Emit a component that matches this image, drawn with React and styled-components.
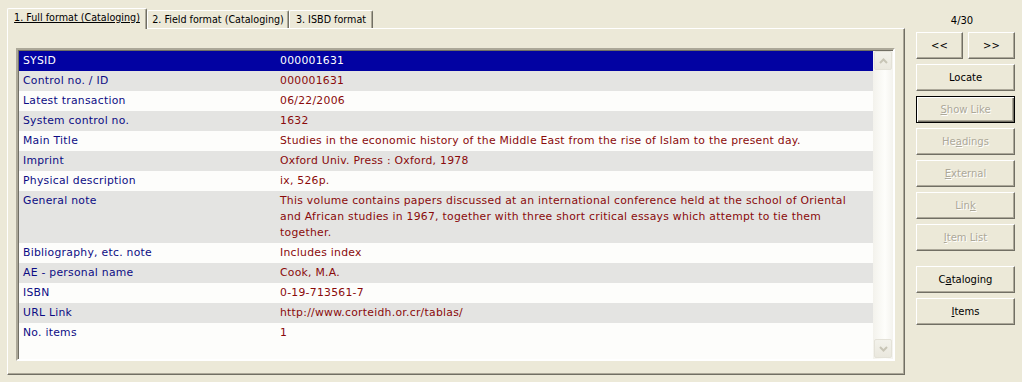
import React from "react";
import styled, { createGlobalStyle, css } from "styled-components";

const GlobalStyle = createGlobalStyle`
  html, body { margin: 0; padding: 0; }
  body {
    background: #ECE9D8;
    font-family: "DejaVu Sans", "Liberation Sans", sans-serif;
    overflow: hidden;
  }
`;

const Page = styled.div`
  display: flex;
  width: 1022px;
  height: 382px;
  box-sizing: border-box;
  padding: 0 7px 0 7px;
`;

const TabArea = styled.div`
  display: flex;
  flex-direction: column;
  width: 898px;
  padding-top: 8px;
`;

const TabStrip = styled.div`
  display: flex;
  align-items: flex-end;
  height: 20px;
  position: relative;
  z-index: 1;
`;

const Tab = styled.div`
  box-sizing: border-box;
  width: ${(p) => p.$w}px;
  height: ${(p) => (p.$active ? 21 : 18)}px;
  margin-bottom: ${(p) => (p.$active ? -1 : 0)}px;
  display: flex;
  align-items: center;
  justify-content: center;
  padding-bottom: ${(p) => (p.$active ? 3 : 0)}px;
  font-size: 9.6px;
  color: #000;
  background: #ECE9D8;
  border-top: 1px solid #fff;
  border-left: 1px solid #fff;
  border-right: 1px solid #716F64;
  box-shadow: inset -1px 0 #ACA899;
  border-radius: 2px 2px 0 0;
  white-space: nowrap;
  ${(p) =>
    p.$active &&
    css`
      text-decoration: underline;
    `}
`;

const TabPanel = styled.div`
  box-sizing: border-box;
  height: 347px;
  border: 1px solid;
  border-color: #fff #716F64 #716F64 #fff;
  box-shadow: inset -1px -1px #ACA899;
  padding: 19px 0 0 8px;
`;

const ListBox = styled.div`
  box-sizing: border-box;
  width: 879px;
  height: 313px;
  border: 2px solid;
  border-color: #ACA899 #fff #fff #ACA899;
  box-shadow: inset 1px 1px #716F64, inset -1px -1px #F1EFE2;
  display: flex;
  padding: 1px 0 0 1px;
  background: #fff;
`;

const Rows = styled.div`
  flex: 1;
  background: #FDFDFB;
  overflow: hidden;
`;

const Row = styled.div`
  display: grid;
  grid-template-columns: 261px 1fr;
  box-sizing: border-box;
  padding: 2px 0;
  min-height: 20px;
  line-height: 16px;
  font-size: 10.8px;
  letter-spacing: 0.27px;
  background: ${(p) => (p.$selected ? "#0202A2" : p.$shade ? "#E4E4E2" : "#FDFDFB")};
  border-bottom: 1px dotted
    ${(p) => (p.$selected ? "#0202A2" : p.$last ? "transparent" : "#DADAD6")};
  margin-bottom: -1px;
`;

const Label = styled.div`
  padding-left: 4px;
  color: ${(p) => (p.$selected ? "#fff" : "#0C0C84")};
  white-space: nowrap;
`;

const Value = styled.div`
  color: ${(p) => (p.$selected ? "#fff" : "#8A0A0A")};
  padding-right: 16px;
`;

const Line = styled.div`
  white-space: nowrap;
`;

const Scroll = styled.div`
  width: 20px;
  display: flex;
  flex-direction: column;
  justify-content: space-between;
  align-items: center;
  padding: 0 1px 1px 1px;
  box-sizing: border-box;
  background: linear-gradient(90deg, #F3F2EC, #FEFEFB 60%, #F4F3EE);
`;

const ScrollBtn = styled.div`
  box-sizing: border-box;
  width: 18px;
  height: 19px;
  border: 1px solid #E4E2D8;
  border-radius: 2px;
  background: linear-gradient(180deg, #F3F2EB, #EAE8DE);
  display: flex;
  align-items: center;
  justify-content: center;
`;

const Side = styled.div`
  width: 99px;
  margin-left: 11px;
  display: flex;
  flex-direction: column;
  gap: 5px;
`;

const Counter = styled.div`
  height: 27px;
  font-size: 10px;
  display: flex;
  align-items: flex-end;
  justify-content: center;
  padding-right: 7px;
  padding-bottom: 1px;
  box-sizing: border-box;
  color: #000;
`;

const NavRow = styled.div`
  display: flex;
  gap: 5px;
`;

const Button = styled.div`
  box-sizing: border-box;
  width: ${(p) => p.$w || 99}px;
  height: 27px;
  display: flex;
  align-items: center;
  justify-content: center;
  font-size: 10px;
  background: #ECE9D8;
  color: ${(p) => (p.$disabled ? "#ACA899" : "#000")};
  ${(p) =>
    p.$default
      ? css`
          border: 1px solid #000;
          box-shadow: inset 1px 1px #fff, inset -1px -1px #716F64, inset -2px -2px #ACA899;
        `
      : css`
          border: 1px solid;
          border-color: #fff #716F64 #716F64 #fff;
          box-shadow: inset -1px -1px #ACA899;
        `}
  ${(p) =>
    p.$disabled &&
    css`
      text-shadow: 1px 1px 0 #fff;
    `}
  u { text-decoration: underline; }
`;

const Spacer = styled.div`
  height: 5px;
`;

const Chevron = ({ up }) => (
  <svg width="9" height="6" viewBox="0 0 9 6">
    <path
      d={up ? "M1 5 L4.5 1.5 L8 5" : "M1 1 L4.5 4.5 L8 1"}
      fill="none"
      stroke="#C8C5B6"
      strokeWidth="2"
    />
  </svg>
);

const fields = [
  ["SYSID", ["000001631"]],
  ["Control no. / ID", ["000001631"]],
  ["Latest transaction", ["06/22/2006"]],
  ["System control no.", ["1632"]],
  ["Main Title", ["Studies in the economic history of the Middle East from the rise of Islam to the present day."]],
  ["Imprint", ["Oxford Univ. Press : Oxford, 1978"]],
  ["Physical description", ["ix, 526p."]],
  [
    "General note",
    [
      "This volume contains papers discussed at an international conference held at the school of Oriental",
      "and African studies in 1967, together with three short critical essays which attempt to tie them",
      "together.",
    ],
  ],
  ["Bibliography, etc. note", ["Includes index"]],
  ["AE - personal name", ["Cook, M.A."]],
  ["ISBN", ["0-19-713561-7"]],
  ["URL Link", ["http://www.corteidh.or.cr/tablas/"]],
  ["No. items", ["1"]],
];

export default function App() {
  return (
    <>
      <GlobalStyle />
      <Page>
        <TabArea>
          <TabStrip>
            <Tab $w={140} $active>1. Full format (Cataloging)</Tab>
            <Tab $w={142}>2. Field format (Cataloging)</Tab>
            <Tab $w={84}>3. ISBD format</Tab>
          </TabStrip>
          <TabPanel>
            <ListBox>
              <Rows>
                {fields.map(([label, lines], i) => (
                  <Row
                    key={label}
                    $selected={i === 0}
                    $shade={i % 2 === 1}
                    $last={i === fields.length - 1}
                  >
                    <Label $selected={i === 0}>{label}</Label>
                    <Value $selected={i === 0}>
                      {lines.map((l) => (
                        <Line key={l}>{l}</Line>
                      ))}
                    </Value>
                  </Row>
                ))}
              </Rows>
              <Scroll>
                <ScrollBtn>
                  <Chevron up />
                </ScrollBtn>
                <ScrollBtn>
                  <Chevron />
                </ScrollBtn>
              </Scroll>
            </ListBox>
          </TabPanel>
        </TabArea>
        <Side>
          <Counter>4/30</Counter>
          <NavRow>
            <Button $w={47}>&lt;&lt;</Button>
            <Button $w={47}>&gt;&gt;</Button>
          </NavRow>
          <Button>Locate</Button>
          <Button $default $disabled>
            <span><u>S</u>how Like</span>
          </Button>
          <Button $disabled>
            <span>He<u>a</u>dings</span>
          </Button>
          <Button $disabled>
            <span><u>E</u>xternal</span>
          </Button>
          <Button $disabled>
            <span>Lin<u>k</u></span>
          </Button>
          <Button $disabled>
            <span><u>I</u>tem List</span>
          </Button>
          <Spacer />
          <Button>
            <span>C<u>a</u>taloging</span>
          </Button>
          <Button>
            <span><u>I</u>tems</span>
          </Button>
        </Side>
      </Page>
    </>
  );
}
